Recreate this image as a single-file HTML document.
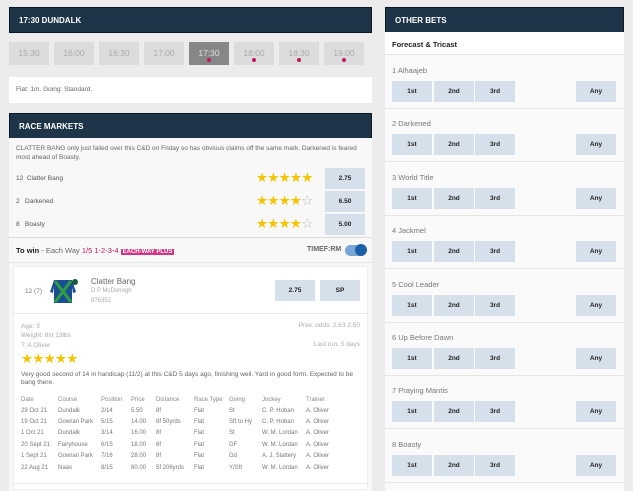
<!DOCTYPE html>
<html><head><style>
*{margin:0;padding:0;box-sizing:border-box}
body{width:633px;height:491px;background:#ececec;font-family:"Liberation Sans",sans-serif;position:relative;overflow:hidden;color:#444}
.a{position:absolute}
.hd{background:#1e3448;color:#fff;font-size:8px;font-weight:bold;padding-left:9px;line-height:25px;border:1px solid #0d1a26}
.tb{position:absolute;top:42px;width:40px;height:23px;background:#dcdcdc;color:#aaa;font-size:8.5px;text-align:center;line-height:22px}
.tb i{position:absolute;left:18px;top:16px;width:4px;height:4px;border-radius:2px;background:#c2185b}
.ob{position:absolute;width:40px;height:21px;background:#d6e0ea;font-size:6.5px;font-weight:bold;color:#222;text-align:center;line-height:21px}
.st{color:#f5c400;font-size:13.5px;letter-spacing:-0.8px;font-family:"DejaVu Sans",sans-serif;line-height:14px}
.st b{color:#bbb;font-weight:normal}
.sm{font-size:6.5px;color:#888}
table{border-collapse:collapse;font-size:6px;color:#777}
td{padding:0;height:11.4px;white-space:nowrap}
th{text-align:left;font-weight:normal;color:#888;height:11px}
</style></head><body>
<div class="a hd" style="left:9px;top:7px;width:363px;height:26px">17:30 DUNDALK</div>
<div class="tb" style="left:9px">15:30</div>
<div class="tb" style="left:54px">16:00</div>
<div class="tb" style="left:99px">16:30</div>
<div class="tb" style="left:144px">17:00</div>
<div class="tb" style="left:189px;background:#878787;color:#ddd">17:30<i></i></div>
<div class="tb" style="left:234px">18:00<i></i></div>
<div class="tb" style="left:279px">18:30<i></i></div>
<div class="tb" style="left:324px">19:00<i></i></div>
<div class="a" style="left:9px;top:77px;width:363px;height:26px;background:#fff;font-size:6.5px;color:#666;padding:9px 7px">Flat: 1m. Going: Standard.</div>
<div class="a hd" style="left:9px;top:113px;width:363px;height:26px">RACE MARKETS</div>
<div class="a" style="left:9px;top:138px;width:363px;height:353px;background:#f8f8f8"></div>
<div class="a" style="left:16px;top:145px;width:350px;font-size:6.5px;color:#666;line-height:8.5px">CLATTER BANG only just failed over this C&amp;D on Friday so has obvious claims off the same mark. Darkened is feared most ahead of Boasty.</div>
<div class="a" style="left:16px;top:175px;font-size:6.5px;color:#555">12&nbsp; Clatter Bang</div>
<div class="a" style="left:16px;top:198px;font-size:6.5px;color:#555">2&nbsp;&nbsp; Darkened</div>
<div class="a" style="left:16px;top:221px;font-size:6.5px;color:#555">8&nbsp;&nbsp; Boasty</div>
<div class="a st" style="left:256px;top:171px">★★★★★</div>
<div class="a st" style="left:256px;top:194px">★★★★<b>☆</b></div>
<div class="a st" style="left:256px;top:217px">★★★★<b>☆</b></div>
<div class="ob" style="left:325px;top:168px">2.75</div>
<div class="ob" style="left:325px;top:191px">6.50</div>
<div class="ob" style="left:325px;top:214px">5.00</div>
<div class="a" style="left:9px;top:237px;width:363px;height:1px;background:#ddd"></div>
<div class="a" style="left:16px;top:246px;font-size:7.5px;color:#666"><b style="color:#222">To win</b> - Each Way <span style="color:#c2185b">1/5 1-2-3-4</span> <span style="background:#d63384;color:#fff;font-size:6px;font-weight:bold;padding:0 2px">EACH-WAY PLUS</span></div>
<div class="a" style="left:307px;top:246px;font-size:7px;font-weight:bold;color:#666">TIMEF:RM</div>
<div class="a" style="left:345px;top:245px;width:21px;height:11px;border-radius:6px;background:#7aa6d6"></div>
<div class="a" style="left:355px;top:244px;width:12px;height:12px;border-radius:6px;background:#1a5fa8"></div>
<div class="a" style="left:9px;top:262px;width:363px;height:1px;background:#e5e5e5"></div>
<div class="a" style="left:13px;top:266px;width:355px;height:224px;background:#fff;border:1px solid #eee"></div>
<div class="a" style="left:13px;top:313px;width:355px;height:1px;background:#e8e8e8"></div>
<div class="a" style="left:14px;top:483px;width:353px;height:1px;background:#e8e8e8"></div>
<div class="a sm" style="left:25px;top:288px;color:#777">12 (7)</div>
<svg class="a" style="left:48px;top:278px" width="30" height="26" viewBox="0 0 30 26"><path d="M6 2 L24 2 L28 14 L25 15 L24 9 L24 25 L6 25 L6 9 L5 15 L2 14 Z" fill="#1b4f93"/><path d="M7 3 L23 24 M23 3 L7 24" stroke="#2e9e3e" stroke-width="3"/><circle cx="27" cy="4" r="3" fill="#1a5a3a"/></svg>
<div class="a" style="left:91px;top:277px;font-size:8px;color:#666">Clatter Bang</div>
<div class="a sm" style="left:91px;top:288px;font-size:6px;color:#aaa">D P McDonogh</div>
<div class="a sm" style="left:91px;top:298px;font-size:6px;color:#aaa">876352</div>
<div class="ob" style="left:275px;top:280px">2.75</div>
<div class="ob" style="left:320px;top:280px">SP</div>
<div class="a sm" style="left:21px;top:322px;color:#aaa;line-height:9.3px">Age: 3<br>Weight: 8st 13lbs<br>T: A Oliver</div>
<div class="a sm" style="right:273px;top:322px;color:#aaa;text-align:right">Prev. odds: 2.63 2.50</div>
<div class="a sm" style="right:273px;top:341px;color:#aaa;text-align:right">Last run: 5 days</div>
<div class="a st" style="left:21px;top:352px;font-size:13.5px">★★★★★</div>
<div class="a" style="left:21px;top:371px;width:340px;font-size:6.5px;color:#666;line-height:8.3px">Very good second of 14 in handicap (11/2) at this C&amp;D 5 days ago, finishing well. Yard in good form. Expected to be bang there.</div>
<table class="a" style="left:21px;top:394px">
<tr><th style="width:37px">Date</th><th style="width:43px">Course</th><th style="width:30px">Position</th><th style="width:25px">Price</th><th style="width:38px">Distance</th><th style="width:35px">Race Type</th><th style="width:33px">Going</th><th style="width:44px">Jockey</th><th>Trainer</th></tr>
<tr><td>29 Oct 21</td><td>Dundalk</td><td>2/14</td><td>5.50</td><td>8f</td><td>Flat</td><td>St</td><td>C. P. Hoban</td><td>A. Oliver</td></tr>
<tr><td>19 Oct 21</td><td>Gowran Park</td><td>5/15</td><td>14.00</td><td>8f 50yrds</td><td>Flat</td><td>Sft to Hy</td><td>C. P. Hoban</td><td>A. Oliver</td></tr>
<tr><td>1 Oct 21</td><td>Dundalk</td><td>3/14</td><td>16.00</td><td>8f</td><td>Flat</td><td>St</td><td>W. M. Lordan</td><td>A. Oliver</td></tr>
<tr><td>20 Sept 21</td><td>Fairyhouse</td><td>6/15</td><td>18.00</td><td>6f</td><td>Flat</td><td>GF</td><td>W. M. Lordan</td><td>A. Oliver</td></tr>
<tr><td>1 Sept 21</td><td>Gowran Park</td><td>7/16</td><td>28.00</td><td>8f</td><td>Flat</td><td>Gd</td><td>A. J. Slattery</td><td>A. Oliver</td></tr>
<tr><td>22 Aug 21</td><td>Naas</td><td>8/15</td><td>80.00</td><td>5f 206yrds</td><td>Flat</td><td>Y/Sft</td><td>W. M. Lordan</td><td>A. Oliver</td></tr>
</table>

<div class="a hd" style="left:385px;top:7px;width:239px;height:26px">OTHER BETS</div>
<div class="a" style="left:385px;top:32px;width:239px;height:459px;background:#fafafa"></div>
<div class="a" style="left:385px;top:32px;width:239px;height:23px;background:#fff;border-bottom:1px solid #e5e5e5;font-size:7.5px;font-weight:bold;color:#222;padding:8px 7px">Forecast &amp; Tricast</div>
<div id="r"></div>
<script>
var n=["1 Alhaajeb","2 Darkened","3 World Title","4 Jackmel","5 Cool Leader","6 Up Before Dawn","7 Praying Mantis","8 Boasty"],h="";
for(var i=0;i<8;i++){var t=55+i*53.4;
h+='<div class="a" style="left:392px;top:'+(t+11)+'px;font-size:7.5px;color:#777">'+n[i]+'</div>';
[["1st",392],["2nd",434],["3rd",475],["Any",576]].forEach(function(b){h+='<div class="ob" style="left:'+b[1]+'px;top:'+(t+26)+'px">'+b[0]+'</div>'});
h+='<div class="a" style="left:385px;top:'+(t+53)+'px;width:239px;height:1px;background:#e5e5e5"></div>';}
document.getElementById("r").innerHTML=h;
</script>
</body></html>
